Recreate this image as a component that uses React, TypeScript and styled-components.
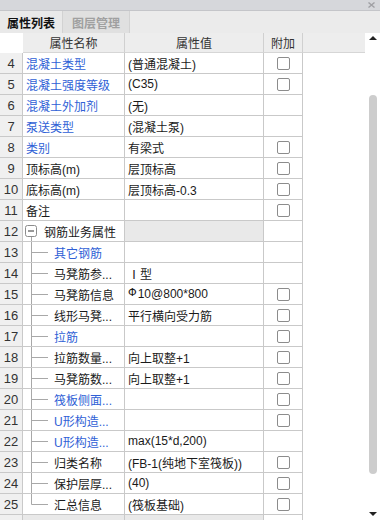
import React from 'react';
import styled, { createGlobalStyle } from 'styled-components';

const GlobalStyle = createGlobalStyle`
  html, body {
    margin: 0;
    padding: 0;
    background: #ffffff;
  }
  body {
    font-family: "Liberation Sans", "Noto Sans CJK SC", sans-serif;
    font-size: 12px;
    color: #222;
  }
`;

type Kind = 'top' | 'group' | 'child' | 'last';

interface Row {
  no: number;
  name: string;
  value?: React.ReactNode;
  blue?: boolean;
  check?: boolean;
  kind: Kind;
}

const rows: Row[] = [
  { no: 4, name: '混凝土类型', value: '(普通混凝土)', blue: true, check: true, kind: 'top' },
  { no: 5, name: '混凝土强度等级', value: '(C35)', blue: true, check: true, kind: 'top' },
  { no: 6, name: '混凝土外加剂', value: '(无)', blue: true, kind: 'top' },
  { no: 7, name: '泵送类型', value: '(混凝土泵)', blue: true, kind: 'top' },
  { no: 8, name: '类别', value: '有梁式', blue: true, check: true, kind: 'top' },
  { no: 9, name: '顶标高(m)', value: '层顶标高', check: true, kind: 'top' },
  { no: 10, name: '底标高(m)', value: '层顶标高-0.3', check: true, kind: 'top' },
  { no: 11, name: '备注', check: true, kind: 'top' },
  { no: 12, name: '钢筋业务属性', kind: 'group' },
  { no: 13, name: '其它钢筋', blue: true, kind: 'child' },
  { no: 14, name: '马凳筋参...', value: 'Ⅰ型', kind: 'child' },
  { no: 15, name: '马凳筋信息', value: 'rebar', check: true, kind: 'child' },
  { no: 16, name: '线形马凳...', value: '平行横向受力筋', check: true, kind: 'child' },
  { no: 17, name: '拉筋', blue: true, check: true, kind: 'child' },
  { no: 18, name: '拉筋数量...', value: '向上取整+1', check: true, kind: 'child' },
  { no: 19, name: '马凳筋数...', value: '向上取整+1', check: true, kind: 'child' },
  { no: 20, name: '筏板侧面...', blue: true, check: true, kind: 'child' },
  { no: 21, name: 'U形构造...', blue: true, check: true, kind: 'child' },
  { no: 22, name: 'U形构造...', value: 'max(15*d,200)', blue: true, kind: 'child' },
  { no: 23, name: '归类名称', value: '(FB-1(纯地下室筏板))', check: true, kind: 'child' },
  { no: 24, name: '保护层厚...', value: '(40)', check: true, kind: 'child' },
  { no: 25, name: '汇总信息', value: '(筏板基础)', check: true, kind: 'last' },
];

const Panel = styled.div`
  width: 380px;
  height: 520px;
  display: flex;
  flex-direction: column;
  overflow: hidden;
  background: #fff;
`;

const TitleStrip = styled.div`
  height: 11px;
  background: #d6d7db;
  border-bottom: 1px solid #c4c5c9;
  display: flex;
  justify-content: flex-end;
  align-items: center;
  padding-right: 5px;
  box-sizing: border-box;
`;

const TabBar = styled.div`
  height: 22px;
  background: #ebebeb;
  display: flex;
`;

const Tab = styled.div<{ $active?: boolean }>`
  width: ${p => (p.$active ? 63 : 67)}px;
  box-sizing: border-box;
  display: flex;
  align-items: center;
  justify-content: center;
  border-right: 1px solid #d2d2d2;
  background: ${p => (p.$active ? '#e9e9e9' : '#e0e0e0')};
  color: ${p => (p.$active ? '#111' : '#a0a0a0')};
  font-size: 12px;
  font-weight: bold;
`;

const Body = styled.div`
  flex: 1;
  display: flex;
  min-height: 0;
`;

const Grid = styled.div`
  flex: 1;
  display: flex;
  flex-direction: column;
  overflow: hidden;
`;

const HeaderRow = styled.div`
  height: 20px;
  display: flex;
  flex-shrink: 0;
`;

const HeadCell = styled.div<{ $w?: number; $blank?: boolean }>`
  width: ${p => (p.$w ? `${p.$w}px` : 'auto')};
  flex: ${p => (p.$w ? 'none' : '1')};
  box-sizing: border-box;
  background: ${p => (p.$blank ? '#fff' : '#ededed')};
  border-right: ${p => (p.$w && !p.$blank ? '1px solid #d0d0d0' : 'none')};
  border-bottom: 1px solid ${p => (p.$blank ? '#fff' : '#d6d6d6')};
  display: flex;
  align-items: center;
  justify-content: center;
  color: #333;
  font-size: 12px;
`;

const DataRow = styled.div`
  height: 21px;
  display: flex;
  flex-shrink: 0;
`;

const Cell = styled.div<{ $w: number; $shade?: string }>`
  width: ${p => p.$w}px;
  flex: none;
  box-sizing: border-box;
  height: 21px;
  border-right: 1px solid #c9c9c9;
  border-bottom: 1px solid #c9c9c9;
  background: ${p => p.$shade || '#fff'};
  display: flex;
  align-items: center;
  overflow: hidden;
  white-space: nowrap;
`;

const NumCell = styled(Cell)`
  justify-content: center;
  font-size: 13px;
  color: #333;
`;

const NameCell = styled(Cell)<{ $blue?: boolean; $pad: number }>`
  padding-left: ${p => p.$pad}px;
  color: ${p => (p.$blue ? '#2f5fd6' : '#1a1a1a')};
`;

const ValueCell = styled(Cell)`
  padding-left: 3px;
  color: #1a1a1a;
`;

const CheckCell = styled(Cell)`
  justify-content: center;
`;

const Filler = styled.div`
  flex: 1;
  height: 21px;
  background: #fff;
`;

const CheckBox = styled.span`
  width: 13px;
  height: 13px;
  box-sizing: border-box;
  border: 1px solid #8c8c8c;
  border-radius: 2px;
  background: #fff;
`;

const Guide = styled.svg`
  flex: none;
  display: block;
`;

const Rebar = styled.span`
  font-size: 11px;
  position: relative;
  top: -2px;
  margin-right: 1px;
  font-family: "DejaVu Sans", sans-serif;
`;

const ScrollTrack = styled.div`
  width: 15px;
  flex: none;
  display: flex;
  flex-direction: column;
  align-items: center;
  background: #fff;
`;

const Thumb = styled.div`
  width: 8px;
  height: 379px;
  margin-top: 55px;
  border-radius: 4px;
  background: #cdcdcd;
`;

const Spacer = styled.div`
  flex: 1;
`;

const Arrow = styled.svg<{ $top?: boolean }>`
  display: block;
  margin-top: ${p => (p.$top ? '3px' : '0')};
  margin-bottom: ${p => (p.$top ? '0' : '4px')};
`;

const W = { no: 23, name: 102, value: 139, add: 39 };

function TreeGuide({ kind }: { kind: Kind }) {
  if (kind === 'group') {
    return (
      <Guide width="21" height="20" viewBox="0 0 21 20">
        <rect x="2.5" y="4.5" width="11" height="11" rx="2" fill="#fff" stroke="#8c8c8c" />
        <line x1="5" y1="10" x2="11" y2="10" stroke="#333" />
        <line x1="8.5" y1="16" x2="8.5" y2="20" stroke="#a8a8a8" />
      </Guide>
    );
  }
  return (
    <Guide width="31" height="20" viewBox="0 0 31 20">
      <line x1="8.5" y1="0" x2="8.5" y2={kind === 'last' ? 10.5 : 20} stroke="#a8a8a8" />
      <line x1="8.5" y1="10.5" x2="25" y2="10.5" stroke="#a8a8a8" />
    </Guide>
  );
}

function renderValue(v: React.ReactNode) {
  if (v === 'rebar') {
    return (
      <>
        <Rebar>Φ</Rebar>10@800*800
      </>
    );
  }
  return v;
}

export default function App() {
  return (
    <Panel>
      <GlobalStyle />
      <TitleStrip>
        <svg width="7" height="6" viewBox="0 0 7 6">
          <path d="M0.5 0.5 L6.5 5.5 M6.5 0.5 L0.5 5.5" stroke="#a0a0a4" strokeWidth="1.4" />
        </svg>
      </TitleStrip>
      <TabBar>
        <Tab $active>属性列表</Tab>
        <Tab>图层管理</Tab>
      </TabBar>
      <Body>
        <Grid>
          <HeaderRow>
            <HeadCell $w={W.no} $blank />
            <HeadCell $w={W.name}>属性名称</HeadCell>
            <HeadCell $w={W.value}>属性值</HeadCell>
            <HeadCell $w={W.add}>附加</HeadCell>
            <HeadCell />
          </HeaderRow>
          {rows.map(r => {
            const tree = r.kind !== 'top';
            return (
              <DataRow key={r.no}>
                <NumCell $w={W.no} $shade="#f0f0f0">{r.no}</NumCell>
                <NameCell $w={W.name} $blue={r.blue} $pad={tree ? 0 : 3}>
                  {tree && <TreeGuide kind={r.kind} />}
                  {r.name}
                </NameCell>
                <ValueCell $w={W.value} $shade={r.kind === 'group' ? '#e9e9e9' : undefined}>
                  {renderValue(r.value)}
                </ValueCell>
                <CheckCell $w={W.add}>{r.check && <CheckBox />}</CheckCell>
                <Filler />
              </DataRow>
            );
          })}
          <DataRow>
            <NumCell $w={W.no} $shade="#f0f0f0" />
            <NameCell $w={W.name} $pad={0} $shade="#e9e9e9" />
            <ValueCell $w={W.value} $shade="#e9e9e9" />
            <CheckCell $w={W.add} />
            <Filler />
          </DataRow>
        </Grid>
        <ScrollTrack>
          <Arrow $top width="8" height="4" viewBox="0 0 8 4">
            <path d="M0 4 L4 0 L8 4 Z" fill="#222" />
          </Arrow>
          <Thumb />
          <Spacer />
          <Arrow width="8" height="4" viewBox="0 0 8 4">
            <path d="M0 0 L8 0 L4 4 Z" fill="#222" />
          </Arrow>
        </ScrollTrack>
      </Body>
    </Panel>
  );
}
